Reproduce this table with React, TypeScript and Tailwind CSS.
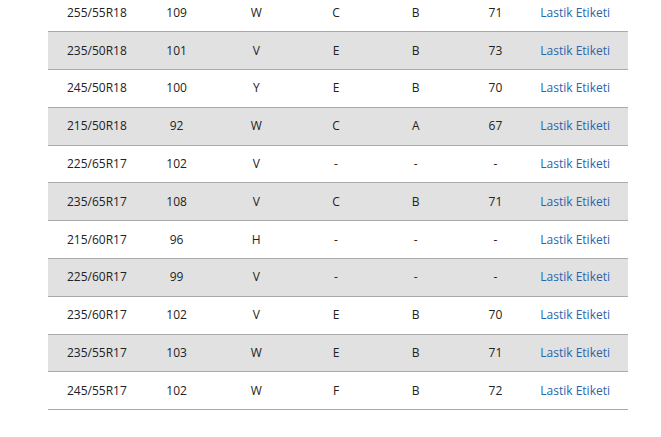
const rows = [
  ["255/55R18", "109", "W", "C", "B", "71"],
  ["235/50R18", "101", "V", "E", "B", "73"],
  ["245/50R18", "100", "Y", "E", "B", "70"],
  ["215/50R18", "92", "W", "C", "A", "67"],
  ["225/65R17", "102", "V", "-", "-", "-"],
  ["235/65R17", "108", "V", "C", "B", "71"],
  ["215/60R17", "96", "H", "-", "-", "-"],
  ["225/60R17", "99", "V", "-", "-", "-"],
  ["235/60R17", "102", "V", "E", "B", "70"],
  ["235/55R17", "103", "W", "E", "B", "71"],
  ["245/55R17", "102", "W", "F", "B", "72"],
];

export default function App() {
  return (
    <div className="h-[437px] w-[661px] overflow-hidden bg-white font-['Open_Sans',sans-serif] text-[12px] text-[#222]">
      <div className="ml-[48px] -mt-[5.5px] w-[580px]">
        {rows.map((row, i) => (
          <div
            key={row[0] + i}
            className={`grid h-[37.8px] grid-cols-7 items-center border-b border-[#aaa] pl-[9px] pr-[13px] text-center ${
              i % 2 === 1 ? "bg-[#e1e1e1]" : "bg-white"
            }`}
          >
            {row.map((cell, j) => (
              <span key={j}>{cell}</span>
            ))}
            <a href="#" className="text-[#2a64ad]">
              Lastik Etiketi
            </a>
          </div>
        ))}
      </div>
    </div>
  );
}
